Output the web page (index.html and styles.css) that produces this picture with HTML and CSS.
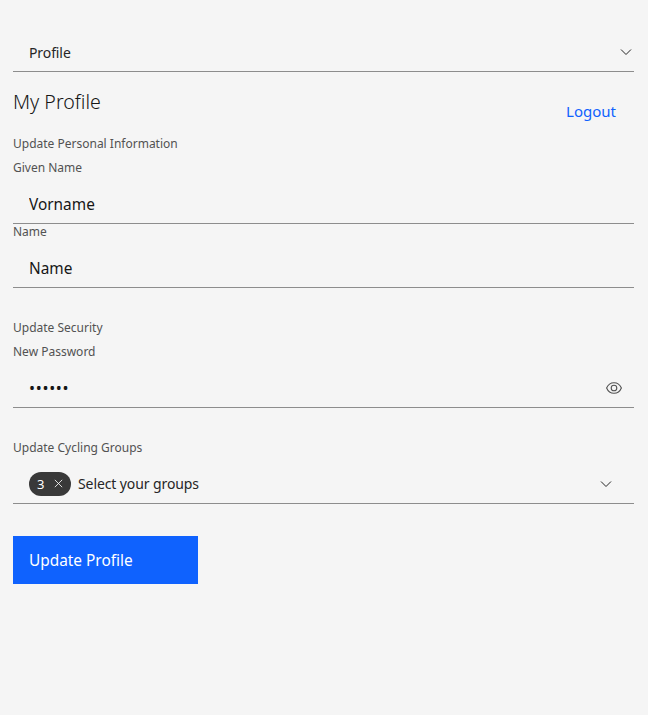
FILE: index.html
```html
<!DOCTYPE html>
<html>
<head>
    <title>My Profile</title>
    <link rel="stylesheet" href="styles.css">
</head>
<body>
    <div class="container">
        <div class="select-box">
            <span class="select-text">Profile</span>
            <svg class="chevron" viewBox="0 0 16 16"><path d="M3 5.500l5 5 5-5" /></svg>
        </div>

        <div class="header">
            <h1>My Profile</h1>
            <a class="logout" href="#">Logout</a>
        </div>

        <form>
            <div class="label heading">Update Personal Information</div>
            <label class="label" for="given">Given Name</label>
            <div class="field"><input id="given" type="text" value="Vorname"></div>
            <label class="label" for="name">Name</label>
            <div class="field"><input id="name" type="text" value="Name"></div>

            <div class="label heading section">Update Security</div>
            <label class="label" for="password">New Password</label>
            <div class="field">
                <input id="password" class="password" type="password" value="secret">
                <svg class="eye" viewBox="0 0 16 16">
                    <path d="M.6 8C2 4.700 4.800 2.700 8 2.700s6 2 7.400 5.300c-1.400 3.300-4.200 5.300-7.400 5.300S2 11.300.6 8z" />
                    <circle cx="8" cy="8" r="2.800" />
                </svg>
            </div>

            <div class="label heading section">Update Cycling Groups</div>
            <div class="multi-select">
                <span class="tag">3
                    <svg class="tag-close" viewBox="0 0 16 16"><path d="M3.500 3.500l9 9M12.500 3.500l-9 9" /></svg>
                </span>
                <span class="select-text">Select your groups</span>
                <svg class="chevron" viewBox="0 0 16 16"><path d="M3 5.500l5 5 5-5" /></svg>
            </div>

            <button type="button">Update Profile</button>
        </form>
    </div>
</body>
</html>
```

FILE: styles.css
```css
body {
    margin: 0;
    background-color: #fff;
    color: #161616;
    font-family: "Noto Sans", "Open Sans", sans-serif;
    overflow: hidden;
}
.container {
    height: 715px;
    box-sizing: border-box;
    margin-right: 3px;
    padding: 32px 14px 0 13px;
    background-color: #f5f5f5;
}
.select-box {
    display: flex;
    align-items: center;
    justify-content: space-between;
    height: 38px;
    padding: 1px 0 0 16px;
    border-bottom: 1px solid #8d8d8d;
}
.select-text {
    font-size: 14px;
    letter-spacing: -0.1px;
    color: #262626;
}
.chevron {
    width: 16px;
    height: 16px;
    fill: none;
    stroke: #262626;
    stroke-width: 1;
}
.header {
    display: flex;
    justify-content: space-between;
    height: 64px;
}
h1 {
    margin: 16px 0 0;
    font-size: 19.600px;
    font-weight: 300;
    line-height: 28px;
}
.logout {
    margin-top: 28px;
    margin-right: 18px;
    font-size: 15px;
    line-height: 22px;
    color: #0f62fe;
    text-decoration: none;
}
.label {
    display: block;
    font-size: 12px;
    line-height: 16px;
    color: #525252;
}
.heading {
    margin-bottom: 8px;
}
.section {
    margin-top: 32px;
}
.field {
    display: flex;
    align-items: center;
    box-sizing: border-box;
    height: 48px;
    padding-top: 9px;
    border-bottom: 1px solid #8d8d8d;
}
input {
    flex: 1;
    min-width: 0;
    height: 100%;
    box-sizing: border-box;
    padding: 0 16px;
    border: 0;
    outline: 0;
    background: transparent;
    color: #161616;
    font-family: inherit;
    font-size: 15.400px;
}
.password {
    font-size: 16px;
    letter-spacing: 0.700px;
}
.eye {
    width: 16px;
    height: 16px;
    margin-right: 12px;
    fill: none;
    stroke: #525252;
    stroke-width: 1.100;
}
.multi-select {
    display: flex;
    align-items: center;
    height: 39px;
    padding: 0 20px 0 16px;
    border-bottom: 1px solid #8d8d8d;
}
.multi-select .select-text {
    flex: 1;
    margin-left: 7px;
}
.tag {
    display: flex;
    align-items: center;
    justify-content: space-between;
    box-sizing: border-box;
    width: 42px;
    height: 24px;
    padding: 0 6px 0 8px;
    border-radius: 12px;
    background-color: #393939;
    color: #fff;
    font-size: 13px;
}
.tag-close {
    width: 13px;
    height: 13px;
    fill: none;
    stroke: #fff;
    stroke-width: 1;
}
button {
    display: block;
    width: 185px;
    height: 48px;
    margin-top: 32px;
    padding: 0 16px;
    border: 0;
    background-color: #0f62fe;
    color: #fff;
    font-family: inherit;
    font-size: 15.400px;
    text-align: left;
    cursor: pointer;
}
```
